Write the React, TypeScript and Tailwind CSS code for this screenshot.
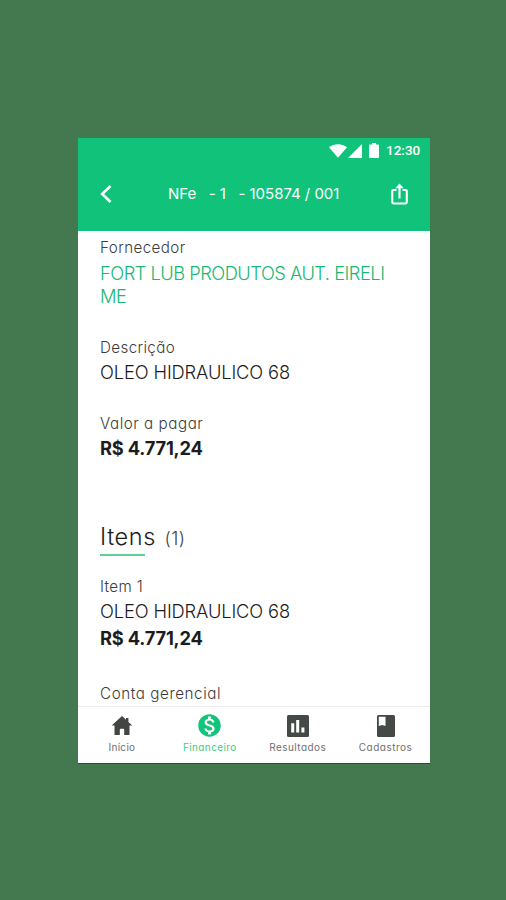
import type { ReactNode } from "react";
import { MdMonetizationOn } from "react-icons/md";

const HomeIcon = () => (
  <svg width="22" height="22" viewBox="0 0 22 22" fill="currentColor">
    <path d="M11 1L.7 10.6h2.8V20h5.3v-5.500q0-.8.8-.8h2.800q.8 0 .8.8V20h5.300v-9.400h2.800L17.400 7V3h-2.400v1.800z" />
  </svg>
);

const ChartIcon = () => (
  <svg width="22" height="22" viewBox="0 0 22 22" fill="currentColor">
    <rect width="22" height="22" rx="1.5" />
    <path d="M4.200 8.300h3v9.200h-3zM9.200 5h3v12.500h-3zM14.400 12.500h3v5h-3z" fill="#fff" />
  </svg>
);

const BookIcon = () => (
  <svg width="18" height="22" viewBox="0 0 18 22" fill="currentColor">
    <rect width="18" height="22" rx="1.5" />
    <path d="M1.800 1.800h6.700v9.200L5.200 10l-3.400 1z" fill="#fff" />
  </svg>
);

const ShareIcon = () => (
  <svg width="17" height="22" viewBox="0 0 17 22" fill="none" stroke="currentColor" strokeWidth="2.1">
    <path d="M5.500 7H2.600Q1.200 7 1.200 8.400v10.700q0 1.400 1.400 1.400h11.800q1.400 0 1.400-1.400V8.400Q15.800 7 14.400 7h-2.900" />
    <path d="M8.500 4v11.500" />
    <path d="M8.500.5l4.200 4.700H4.300z" fill="currentColor" stroke="none" />
  </svg>
);

const Label = ({ children, className = "" }: { children: ReactNode; className?: string }) => (
  <div className={`h-5 whitespace-nowrap text-[15.2px] leading-5 text-[#3c3c3c] ${className}`}>{children}</div>
);

const Value = ({ children, className = "" }: { children: ReactNode; className?: string }) => (
  <div className={`whitespace-nowrap text-[18.3px] leading-[23px] ${className}`}>{children}</div>
);

const tabs = [
  { name: "Início", icon: <HomeIcon />, className: "text-[#707070] tracking-[0.3px]", iconClass: "text-[#424542]" },
  { name: "Financeiro", icon: <MdMonetizationOn size={27} />, className: "text-[#3fc98a] tracking-[0.4px]", iconClass: "text-[#10c47a]" },
  { name: "Resultados", icon: <ChartIcon />, className: "text-[#707070] tracking-[0.45px]", iconClass: "text-[#454a46]" },
  { name: "Cadastros", icon: <BookIcon />, className: "text-[#707070] tracking-[0.5px]", iconClass: "text-[#454a46]" },
];

const Header = () => (
  <div className="h-[93px] shrink-0 bg-[#11c37a] text-white">
    <div className="flex h-[25px] items-center pl-[251px]">
      <svg width="18" height="14" viewBox="0 0 18 14" fill="currentColor">
        <path d="M0 3.200C5-.8 13-.8 18 3.200L9 13.800z" />
      </svg>
      <svg className="ml-[1px]" width="14" height="14" viewBox="0 0 14 14" fill="currentColor">
        <path d="M14 0v14H0z" />
      </svg>
      <svg className="ml-[7px]" width="10" height="15" viewBox="0 0 10 15" fill="currentColor">
        <path d="M3 0h4v1.600h2q1 0 1 1V14q0 1-1 1H1q-1 0-1-1V2.600q0-1 1-1h2z" />
      </svg>
      <span className="ml-[7px] font-['Roboto',sans-serif] text-[13.5px] font-medium">12:30</span>
    </div>
    <div className="flex h-[62px] items-center pr-[22px] pl-[22px]">
      <svg width="12" height="18" viewBox="0 0 12 18" fill="none" stroke="currentColor" strokeWidth="2.6">
        <path d="M10.500 1L2.200 9l8.300 8" />
      </svg>
      <div className="ml-[56px] flex-1 whitespace-pre text-[15px] font-normal tracking-[-0.03px]">NFe   - 1   - 105874 / 001</div>
      <ShareIcon />
    </div>
  </div>
);

const App = () => {
  return (
    <div className="h-[900px] w-[506px] bg-[#44794f] pt-[138px] pl-[78px] font-['Inter',sans-serif] font-light text-[#1c1c1c] [font-feature-settings:'cv11']">
      <div className="flex h-[626px] w-[351.5px] flex-col overflow-hidden border-b border-[#12601f] bg-white">
        <Header />
        <div className="h-[475px] shrink-0 overflow-hidden px-[22px] pt-[7px]">
          <Label className="tracking-[0.4px]">Fornecedor</Label>
          <Value className="mt-[3.5px] tracking-[-0.5px] text-[#18b873]">
            FORT LUB PRODUTOS AUT. EIRELI
            <br />
            ME
          </Value>

          <Label className="mt-[30px] tracking-[0.36px]">Descrição</Label>
          <Value className="mt-[3px] tracking-[-0.12px]">OLEO HIDRAULICO 68</Value>

          <Label className="mt-[30.5px] tracking-[0.54px]">Valor a pagar</Label>
          <Value className="mt-[3px] font-bold tracking-[-0.2px]">R$ 4.771,24</Value>

          <div className="mt-[62px] flex h-[30px] items-baseline text-[23.5px] leading-[30px]">
            <span className="tracking-[0.6px]">Itens</span>
            <span className="ml-[8.5px] text-[18px] tracking-[0.5px] text-[#444]">(1)</span>
          </div>
          <div className="mt-[1.5px] h-[2px] w-[45px] bg-[#5fd09a]" />

          <Label className="mt-[21.5px] tracking-[0.35px]">Item 1</Label>
          <Value className="mt-[3px] tracking-[-0.12px]">OLEO HIDRAULICO 68</Value>
          <Value className="mt-[4px] font-bold tracking-[-0.2px]">R$ 4.771,24</Value>

          <Label className="mt-[34px] tracking-[0.58px]">Conta gerencial</Label>
        </div>
        <div className="grid flex-1 grid-cols-4 border-t border-[#ececec]">
          {tabs.map((tab) => (
            <div key={tab.name} className="flex flex-col items-center pt-1">
              <div className={`flex h-[29px] items-center ${tab.iconClass}`}>{tab.icon}</div>
              <div className={`text-[10px] leading-[14px] font-normal ${tab.className}`}>{tab.name}</div>
            </div>
          ))}
        </div>
      </div>
    </div>
  );
};

export default App;
